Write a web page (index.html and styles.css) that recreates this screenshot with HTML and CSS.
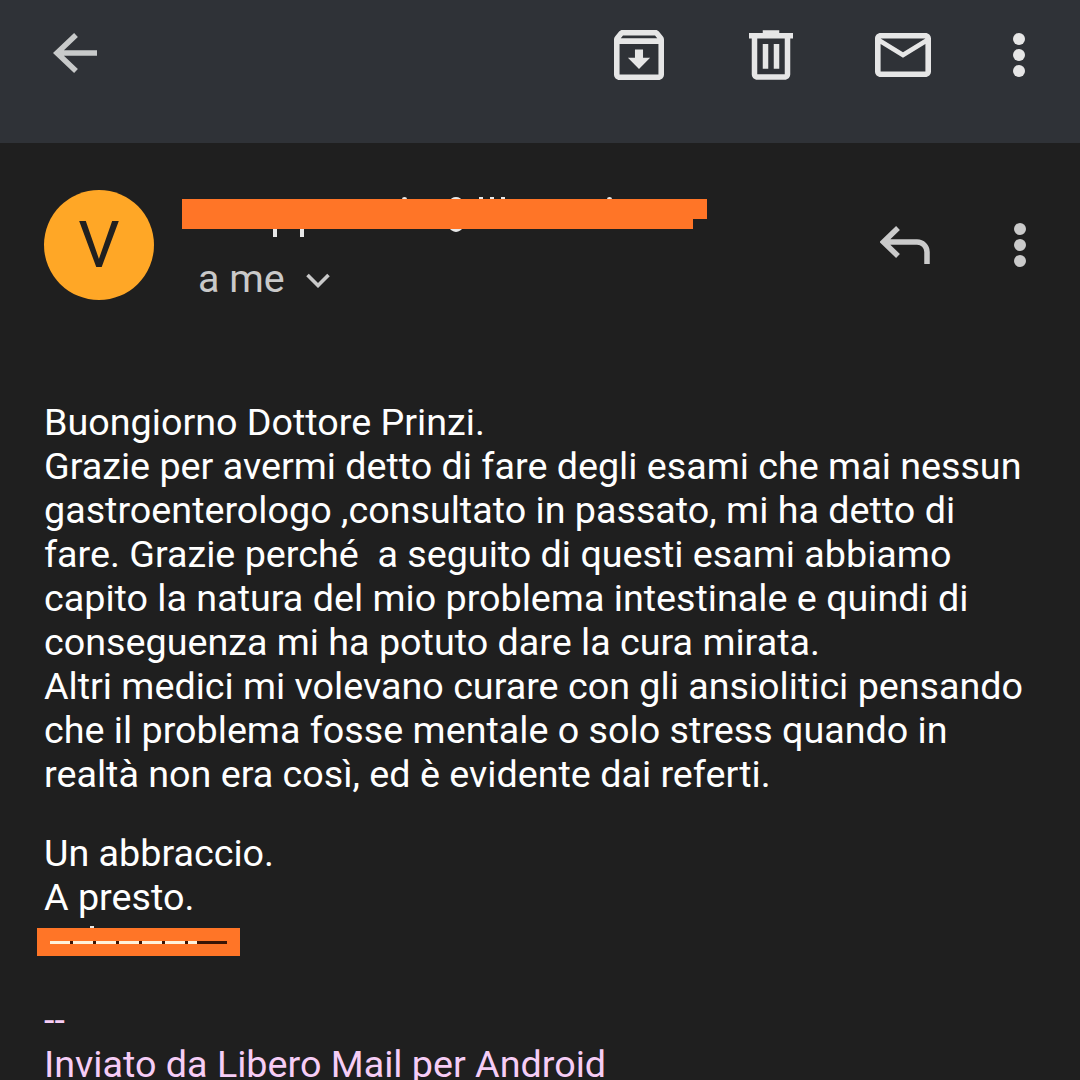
FILE: index.html
```html
<!DOCTYPE html>
<html>
<head>
    <title>Email</title>
    <link rel="stylesheet" href="styles.css">
</head>
<body>
    <header class="toolbar">
        <svg class="icon-back" viewBox="0 0 46 46"><path d="M45 23H6M24 5 5 23l19 18"/></svg>
        <div class="toolbar-actions">
            <svg class="icon-archive" viewBox="3 3 18 18"><path d="M20.540 5.230l-1.390-1.680C18.880 3.210 18.470 3 18 3H6c-.470 0-.880.210-1.160.550L3.460 5.230C3.170 5.570 3 6.020 3 6.500V19c0 1.100.900 2 2 2h14c1.100 0 2-.900 2-2V6.500c0-.480-.170-.930-.460-1.270zM6.240 5h11.520l.810.970H5.440l.800-.970zM5 19V8h14v11H5zm8.450-9h-2.900v3H8l4 4 4-4h-2.550z"/></svg>
            <svg class="icon-trash" viewBox="4 3 16 18"><path d="M15 4V3H9v1H4v2h1v13c0 1.100.900 2 2 2h10c1.100 0 2-.900 2-2V6h1V4h-5zm2 15H7V6h10v13zM9 8h2v9H9zm4 0h2v9h-2z"/></svg>
            <svg class="icon-mail" viewBox="2 4 20 16" preserveAspectRatio="none"><path d="M20 4H4c-1.100 0-2 .900-2 2v12c0 1.100.900 2 2 2h16c1.100 0 2-.900 2-2V6c0-1.100-.900-2-2-2zm0 14H4V8l8 5 8-5v10zm-8-7L4 6h16l-8 5z"/></svg>
            <div class="dots dots-light"><span></span><span></span><span></span></div>
        </div>
    </header>

    <main class="content">
        <section class="sender">
            <div class="avatar">V</div>
            <div class="sender-info">
                <div class="sender-name">
                    <i class="scrap stem stem-1"></i>
                    <i class="scrap stem stem-2"></i>
                    <i class="scrap at-sign"></i>
                    <i class="scrap speck speck-1"></i>
                    <i class="scrap speck speck-2"></i>
                    <i class="scrap speck speck-3"></i>
                    <i class="scrap speck speck-4"></i>
                    <i class="scrap speck speck-5"></i>
                    <div class="redact redact-name"></div>
                    <div class="redact redact-name-end"></div>
                </div>
                <div class="recipient">
                    <span>a me</span>
                    <svg class="icon-chevron" viewBox="0 0 24 15"><path d="M1.500 2 12 12.500 22.500 2"/></svg>
                </div>
            </div>
            <svg class="icon-reply" viewBox="0 0 50 40"><path d="M18 3 3.500 17 18 31M4 17h33a10 10 0 0 1 10 10v12"/></svg>
            <div class="dots dots-grey"><span></span><span></span><span></span></div>
        </section>

        <article class="message">
            <p class="para">Buongiorno Dottore Prinzi.<br>
            Grazie per avermi detto di fare degli esami che mai nessun gastroenterologo ,consultato in passato, mi ha detto di fare. Grazie perché&nbsp; a seguito di questi esami abbiamo capito la natura del mio problema intestinale e quindi di conseguenza mi ha potuto dare la cura mirata.<br>
            Altri medici mi volevano curare con gli ansiolitici pensando che il problema fosse mentale o solo stress quando in realtà non era così, ed è evidente dai referti.</p>

            <p class="para closing">Un abbraccio.<br>A presto.</p>
            <div class="signature">
                <i class="scrap speck-signature"></i>
                <div class="redact redact-signature"><div class="signature-strike"></div></div>
            </div>

            <p class="footer-note">--<br>Inviato da Libero Mail per Android</p>
        </article>
    </main>
</body>
</html>
```

FILE: styles.css
```css
html, body {
    height: 1080px;
    overflow: hidden;
}

body {
    margin: 0;
    background-color: #1f1f1f;
    font-family: Roboto, "Liberation Sans", sans-serif;
    color: #fff;
}

.toolbar {
    height: 143px;
    background-color: #2f3237;
    box-sizing: border-box;
    padding: 30px 55px 0 52px;
    display: flex;
    justify-content: space-between;
    align-items: flex-start;
}

.toolbar svg {
    fill: #e6e6e6;
    display: block;
}

.toolbar .icon-back {
    width: 46px;
    height: 46px;
    fill: none;
    stroke: #c8caca;
    stroke-width: 5.5;
}

.toolbar-actions {
    display: flex;
    align-items: flex-start;
}

.icon-archive {
    width: 50px;
    height: 50px;
}

.icon-trash {
    width: 44px;
    height: 50px;
    margin-left: 85px;
}

.icon-mail {
    width: 56px;
    height: 44px;
    margin: 3px 0 0 82px;
}

.dots {
    display: flex;
    flex-direction: column;
    gap: 4px;
    width: 12px;
}

.dots span {
    width: 12px;
    height: 12px;
    border-radius: 50%;
}

.dots-light {
    margin: 3px 0 0 82px;
}

.dots-light span {
    background-color: #e6e6e6;
}

.dots-grey {
    margin: 33px 0 0 84px;
}

.dots-grey span {
    background-color: #cacaca;
}

.content {
    padding: 0 44px;
}

.sender {
    display: flex;
    align-items: flex-start;
    padding-top: 47px;
    height: 205px;
    box-sizing: border-box;
}

.avatar {
    width: 110px;
    height: 110px;
    border-radius: 50%;
    background-color: #ffa726;
    color: #202020;
    font-size: 65px;
    line-height: 110px;
    text-align: center;
    flex-shrink: 0;
}

.sender-info {
    width: 726px;
    flex-shrink: 0;
}

.sender-name {
    position: relative;
    height: 67px;
}

.recipient {
    display: flex;
    align-items: center;
    margin-left: 44px;
    font-size: 39.4px;
    line-height: 44px;
    color: #c9c9c9;
}

.icon-chevron {
    width: 24px;
    height: 15px;
    margin: 3px 0 0 21px;
    fill: none;
    stroke: #c9c9c9;
    stroke-width: 3.6;
}

.icon-reply {
    width: 50px;
    height: 40px;
    margin-top: 35px;
    fill: none;
    stroke: #cacaca;
    stroke-width: 5.5;
    flex-shrink: 0;
}

.redact {
    background-color: #ff7527;
    position: absolute;
}

.redact-name {
    left: 28px;
    top: 9px;
    width: 511px;
    height: 30px;
}

.redact-name-end {
    left: 28px;
    top: 9px;
    width: 525px;
    height: 20px;
}

/* bits of the letters that stick out of the orange bars */
.scrap {
    position: absolute;
    background-color: #e8e8e8;
}

.stem {
    top: 36px;
    width: 4px;
    height: 11px;
}

.stem-1 {
    left: 119px;
}

.stem-2 {
    left: 146px;
}

.at-sign {
    left: 291px;
    top: 7px;
    width: 22px;
    height: 35px;
    border-radius: 50%;
}

.speck {
    top: 7px;
    width: 4px;
    height: 4px;
}

.speck-1 {
    left: 248px;
    border-radius: 50%;
    width: 5px;
}

.speck-2 {
    left: 325px;
}

.speck-3 {
    left: 336px;
}

.speck-4 {
    left: 347px;
}

.speck-5 {
    left: 453px;
    border-radius: 50%;
    width: 5px;
}

.message {
    font-size: 37.7px;
    line-height: 44px;
    width: 982px;
    margin-top: 52px;
}

.para {
    margin: 0;
}

.closing {
    margin-top: 35px;
}

.signature {
    position: relative;
    height: 44px;
}

.redact-signature {
    left: -7px;
    top: 9px;
    width: 203px;
    height: 28px;
}

.speck-signature {
    left: 46px;
    top: 7px;
    width: 4px;
    height: 3px;
}

.signature-strike {
    margin: 13px 0 0 13px;
    width: 177px;
    height: 3px;
    background:
        linear-gradient(to right, transparent 83%, #3a1405 83%),
        repeating-linear-gradient(to right, #fff2dc 0, #fff2dc 20px, #3a1405 20px, #3a1405 23px);
}

.footer-note {
    margin: 35px 0 0;
    color: #f6cdf6;
}
```
